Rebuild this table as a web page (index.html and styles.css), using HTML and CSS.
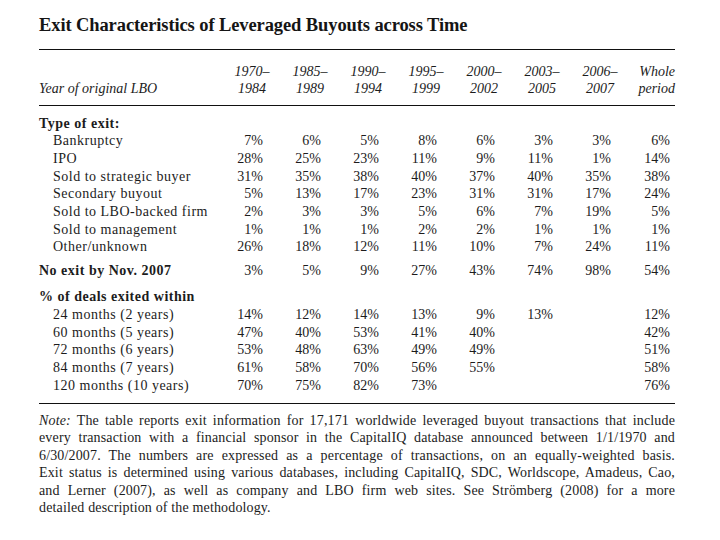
FILE: index.html
```html
<!DOCTYPE html>
<html>
<head>
<meta charset="utf-8">
<link rel="stylesheet" href="styles.css">
</head>
<body>
<div class="page">
  <h1 class="title">Exit Characteristics of Leveraged Buyouts across Time</h1>
  <div class="tbl">
    <div class="head">
      <div class="row">
        <div class="lab"></div>
        <div class="h">1970–</div><div class="h">1985–</div><div class="h">1990–</div><div class="h">1995–</div><div class="h">2000–</div><div class="h">2003–</div><div class="h">2006–</div><div class="h last">Whole</div>
      </div>
      <div class="row">
        <div class="lab it">Year of original LBO</div>
        <div class="h">1984</div><div class="h">1989</div><div class="h">1994</div><div class="h">1999</div><div class="h">2002</div><div class="h">2005</div><div class="h">2007</div><div class="h last">period</div>
      </div>
    </div>
    <div class="body">
      <div class="row"><div class="lab b">Type of exit:</div></div>
      <div class="row"><div class="lab ind">Bankruptcy</div><div class="d">7%</div><div class="d">6%</div><div class="d">5%</div><div class="d">8%</div><div class="d">6%</div><div class="d">3%</div><div class="d">3%</div><div class="d last">6%</div></div>
      <div class="row"><div class="lab ind">IPO</div><div class="d">28%</div><div class="d">25%</div><div class="d">23%</div><div class="d">11%</div><div class="d">9%</div><div class="d">11%</div><div class="d">1%</div><div class="d last">14%</div></div>
      <div class="row"><div class="lab ind">Sold to strategic buyer</div><div class="d">31%</div><div class="d">35%</div><div class="d">38%</div><div class="d">40%</div><div class="d">37%</div><div class="d">40%</div><div class="d">35%</div><div class="d last">38%</div></div>
      <div class="row"><div class="lab ind">Secondary buyout</div><div class="d">5%</div><div class="d">13%</div><div class="d">17%</div><div class="d">23%</div><div class="d">31%</div><div class="d">31%</div><div class="d">17%</div><div class="d last">24%</div></div>
      <div class="row"><div class="lab ind">Sold to LBO-backed firm</div><div class="d">2%</div><div class="d">3%</div><div class="d">3%</div><div class="d">5%</div><div class="d">6%</div><div class="d">7%</div><div class="d">19%</div><div class="d last">5%</div></div>
      <div class="row"><div class="lab ind">Sold to management</div><div class="d">1%</div><div class="d">1%</div><div class="d">1%</div><div class="d">2%</div><div class="d">2%</div><div class="d">1%</div><div class="d">1%</div><div class="d last">1%</div></div>
      <div class="row"><div class="lab ind">Other/unknown</div><div class="d">26%</div><div class="d">18%</div><div class="d">12%</div><div class="d">11%</div><div class="d">10%</div><div class="d">7%</div><div class="d">24%</div><div class="d last">11%</div></div>
      <div class="row gap1"><div class="lab b">No exit by Nov. 2007</div><div class="d">3%</div><div class="d">5%</div><div class="d">9%</div><div class="d">27%</div><div class="d">43%</div><div class="d">74%</div><div class="d">98%</div><div class="d last">54%</div></div>
      <div class="row gap2"><div class="lab b">% of deals exited within</div></div>
      <div class="row"><div class="lab ind">24 months (2 years)</div><div class="d">14%</div><div class="d">12%</div><div class="d">14%</div><div class="d">13%</div><div class="d">9%</div><div class="d">13%</div><div class="d"></div><div class="d last">12%</div></div>
      <div class="row"><div class="lab ind">60 months (5 years)</div><div class="d">47%</div><div class="d">40%</div><div class="d">53%</div><div class="d">41%</div><div class="d">40%</div><div class="d"></div><div class="d"></div><div class="d last">42%</div></div>
      <div class="row"><div class="lab ind">72 months (6 years)</div><div class="d">53%</div><div class="d">48%</div><div class="d">63%</div><div class="d">49%</div><div class="d">49%</div><div class="d"></div><div class="d"></div><div class="d last">51%</div></div>
      <div class="row"><div class="lab ind">84 months (7 years)</div><div class="d">61%</div><div class="d">58%</div><div class="d">70%</div><div class="d">56%</div><div class="d">55%</div><div class="d"></div><div class="d"></div><div class="d last">58%</div></div>
      <div class="row"><div class="lab ind">120 months (10 years)</div><div class="d">70%</div><div class="d">75%</div><div class="d">82%</div><div class="d">73%</div><div class="d"></div><div class="d"></div><div class="d"></div><div class="d last">76%</div></div>
    </div>
  </div>
  <div class="note">
    <span class="ln"><em>Note:</em> The table reports exit information for 17,171 worldwide leveraged buyout transactions that include</span>
    <span class="ln">every transaction with a financial sponsor in the CapitalIQ database announced between 1/1/1970 and</span>
    <span class="ln">6/30/2007. The numbers are expressed as a percentage of transactions, on an equally-weighted basis.</span>
    <span class="ln">Exit status is determined using various databases, including CapitalIQ, SDC, Worldscope, Amadeus, Cao,</span>
    <span class="ln">and Lerner (2007), as well as company and LBO firm web sites. See Strömberg (2008) for a more</span>
    <span class="ln last">detailed description of the methodology.</span>
  </div>
</div>
</body>
</html>
```

FILE: styles.css
```css
html, body {
  margin: 0;
  padding: 0;
  background: #fff;
}
body {
  font-family: "Liberation Serif", "Times New Roman", serif;
  color: #1c1c1c;
  font-size: 14px;
}
.page {
  padding: 14px 0 0 39px;
  width: 636px;
}
.title {
  margin: 0;
  font-size: 18.5px;
  line-height: 23px;
  font-weight: bold;
  letter-spacing: -0.1px;
  color: #151515;
}
.tbl {
  margin-top: 12px;
  border-top: 1px solid #111;
  border-bottom: 1px solid #111;
}
.head {
  padding: 12.5px 0 7.5px;
  border-bottom: 1px solid #111;
}
.head .row {
  line-height: 17.5px;
}
.row {
  display: grid;
  grid-template-columns: 184px repeat(7, 58px) 46px;
  line-height: 17.7px;
  height: 17.7px;
}
.head .row { height: 17.5px; }
.h {
  font-style: italic;
  text-align: center;
}
.h.last { text-align: right; }
.it { font-style: italic; }
.b { font-weight: bold; }
.ind { padding-left: 14px; }
.lab {
  white-space: nowrap;
  letter-spacing: 0.5px;
}
.lab.it { letter-spacing: 0; }
.d {
  text-align: right;
  padding-right: 18px;
}
.d.last { padding-right: 5px; }
.body {
  padding: 8.5px 0 8.5px;
}
.gap1 { margin-top: 6.3px; }
.gap2 { margin-top: 8.3px; }
.note {
  margin-top: 8px;
  line-height: 17.5px;
  letter-spacing: 0.15px;
}
.ln {
  display: block;
  text-align: justify;
  text-align-last: justify;
  white-space: nowrap;
}
.ln.last {
  text-align-last: left;
}
.note em { font-style: italic; }
```
